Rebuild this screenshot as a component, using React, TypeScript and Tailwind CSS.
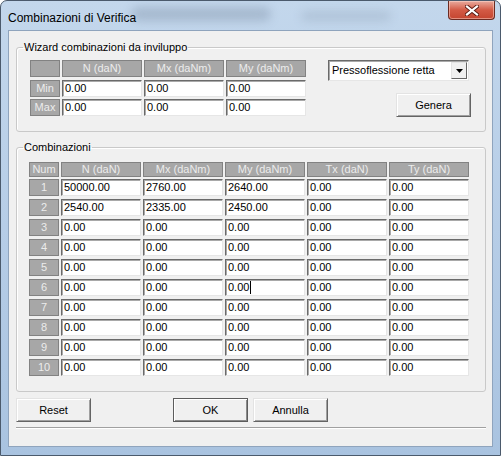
import React from 'react';

const rows: string[][] = [
  ['50000.00', '2760.00', '2640.00', '0.00', '0.00'],
  ['2540.00', '2335.00', '2450.00', '0.00', '0.00'],
  ...Array.from({ length: 8 }, () => ['0.00', '0.00', '0.00', '0.00', '0.00']),
];

function Head({ children, className = '' }: { children?: React.ReactNode; className?: string }) {
  return (
    <div
      className={`flex items-center justify-center border border-[#828282] bg-[#a7a7a7] text-[11px] leading-none text-[#ececec] ${className}`}
    >
      {children}
    </div>
  );
}

function Edit({ value, caret }: { value: string; caret?: boolean }) {
  return (
    <div className="flex h-[17px] items-center border border-t-[#6a6a6a] border-l-[#6a6a6a] border-b-[#e6e6e6] border-r-[#e6e6e6] bg-white pl-[2px] text-[11px] leading-none text-black shadow-[inset_1px_1px_0_#a9a9a9]">
      <span>{value}</span>
      {caret && <span className="ml-[1px] h-[13px] w-[1px] bg-black" />}
    </div>
  );
}

function Button({ label, primary }: { label: string; primary?: boolean }) {
  return (
    <button
      className={`flex h-[24px] w-[75px] items-center justify-center bg-[#f0f0f0] text-[11px] text-black ${
        primary
          ? 'border border-[#5c5c5c] shadow-[inset_1px_1px_0_#ffffff,inset_-1px_-1px_0_#8a8a8a]'
          : 'border border-t-[#e3e3e3] border-l-[#e3e3e3] border-b-[#646464] border-r-[#646464] shadow-[inset_1px_1px_0_#ffffff,inset_-1px_-1px_0_#a0a0a0]'
      }`}
    >
      {label}
    </button>
  );
}

export default function App() {
  return (
    <div className="flex h-[456px] w-[501px] flex-col overflow-hidden rounded-t-[7px] border border-[#4b5a6c] bg-gradient-to-b from-[#c3d7ec] via-[#b6cde7] to-[#a9c3e0] font-['Liberation_Sans',Arial,sans-serif]">
      {/* title bar */}
      <div className="relative flex h-[29px] shrink-0 items-start">
        <div className="absolute left-[130px] top-[6px] h-[14px] w-[140px] rounded-full bg-[#7d8fa6] opacity-40 blur-[5px]" />
        <div className="absolute left-[300px] top-[10px] h-[10px] w-[90px] rounded-full bg-[#8798ad] opacity-30 blur-[5px]" />
        <span className="relative mt-[8px] pl-[7px] text-[12px] text-black">Combinazioni di Verifica</span>
        <div className="relative ml-auto mr-[5px] flex h-[19px] w-[47px] items-center justify-center rounded-b-[4px] border border-t-0 border-[#6b2b22] bg-gradient-to-b from-[#e8aa9e] via-[#d35a45] to-[#c44530] shadow-[inset_0_0_0_1px_rgba(255,220,210,0.5)]">
          <svg width="14" height="11" viewBox="0 0 14 11">
            <path d="M2 1.5 L12 9.5 M12 1.5 L2 9.5" stroke="#5a1a12" strokeWidth="4" strokeLinecap="square" />
            <path d="M2 1.5 L12 9.5 M12 1.5 L2 9.5" stroke="#ffffff" strokeWidth="2.2" strokeLinecap="square" />
          </svg>
        </div>
      </div>

      <div className="flex flex-1 px-[7px] pb-[8px]">
        {/* client area */}
        <div className="flex flex-1 flex-col border border-[#8fa4bd] bg-[#f0f0f0] pl-[7px] pr-[6px] pt-[10px] text-[11px] text-black">
          <fieldset className="rounded-[3px] border border-[#c9c9c9] px-[13px] pb-[14px] pt-[6px] shadow-[inset_1px_1px_0_#ffffff]">
            <legend className="-ml-[7px] px-[1px] text-[11px] leading-[13px]">Wizard combinazioni da inviluppo</legend>
            <div className="flex">
              <div className="grid grid-cols-[30px_repeat(3,80px)] gap-x-[2px] gap-y-[2px]">
                <Head className="h-[17px]" />
                <Head className="h-[17px]">N (daN)</Head>
                <Head className="h-[17px]">Mx (daNm)</Head>
                <Head className="h-[17px]">My (daNm)</Head>
                <Head className="h-[17px]">Min</Head>
                <Edit value="0.00" />
                <Edit value="0.00" />
                <Edit value="0.00" />
                <Head className="h-[17px]">Max</Head>
                <Edit value="0.00" />
                <Edit value="0.00" />
                <Edit value="0.00" />
              </div>
              <div className="ml-[22px] flex w-[143px] flex-col">
                <div className="flex h-[21px] w-[141px] items-center border border-t-[#6a6a6a] border-l-[#6a6a6a] border-b-[#e6e6e6] border-r-[#e6e6e6] bg-white shadow-[inset_1px_1px_0_#a9a9a9]">
                  <span className="flex-1 pl-[3px] text-[11px]">Pressoflessione retta</span>
                  <div className="mr-[1px] flex h-[17px] w-[16px] items-center justify-center border border-t-[#e3e3e3] border-l-[#e3e3e3] border-b-[#646464] border-r-[#646464] bg-[#f0f0f0]">
                    <svg width="7" height="4" viewBox="0 0 7 4">
                      <path d="M0 0 H7 L3.5 4 Z" fill="#000" />
                    </svg>
                  </div>
                </div>
                <div className="mt-[12px] self-end">
                  <Button label="Genera" />
                </div>
              </div>
            </div>
          </fieldset>

          <fieldset className="mt-[9px] rounded-[3px] border border-[#c9c9c9] pb-[15px] pl-[12px] pt-[8px] shadow-[inset_1px_1px_0_#ffffff]">
            <legend className="-ml-[6px] px-[1px] text-[11px] leading-[13px]">Combinazioni</legend>
            <div className="grid grid-cols-[30px_repeat(5,80px)] gap-x-[2px]">
              <Head className="h-[15px]">Num</Head>
              <Head className="h-[15px]">N (daN)</Head>
              <Head className="h-[15px]">Mx (daNm)</Head>
              <Head className="h-[15px]">My (daNm)</Head>
              <Head className="h-[15px]">Tx (daN)</Head>
              <Head className="h-[15px]">Ty (daN)</Head>
            </div>
            <div className="mt-[2px] flex flex-col gap-[3px]">
              {rows.map((r, i) => (
                <div key={i} className="grid grid-cols-[30px_repeat(5,80px)] gap-x-[2px]">
                  <Head className="h-[17px]">{i + 1}</Head>
                  {r.map((v, j) => (
                    <Edit key={j} value={v} caret={i === 5 && j === 2} />
                  ))}
                </div>
              ))}
            </div>
          </fieldset>

          <div className="mt-[6px] flex">
            <Button label="Reset" />
            <div className="ml-[82px] flex gap-[5px]">
              <Button label="OK" primary />
              <Button label="Annulla" />
            </div>
          </div>

          <div className="mt-[5px] flex-1 border-t border-[#a0a0a0] shadow-[inset_0_1px_0_#ffffff]" />
        </div>
      </div>
    </div>
  );
}
